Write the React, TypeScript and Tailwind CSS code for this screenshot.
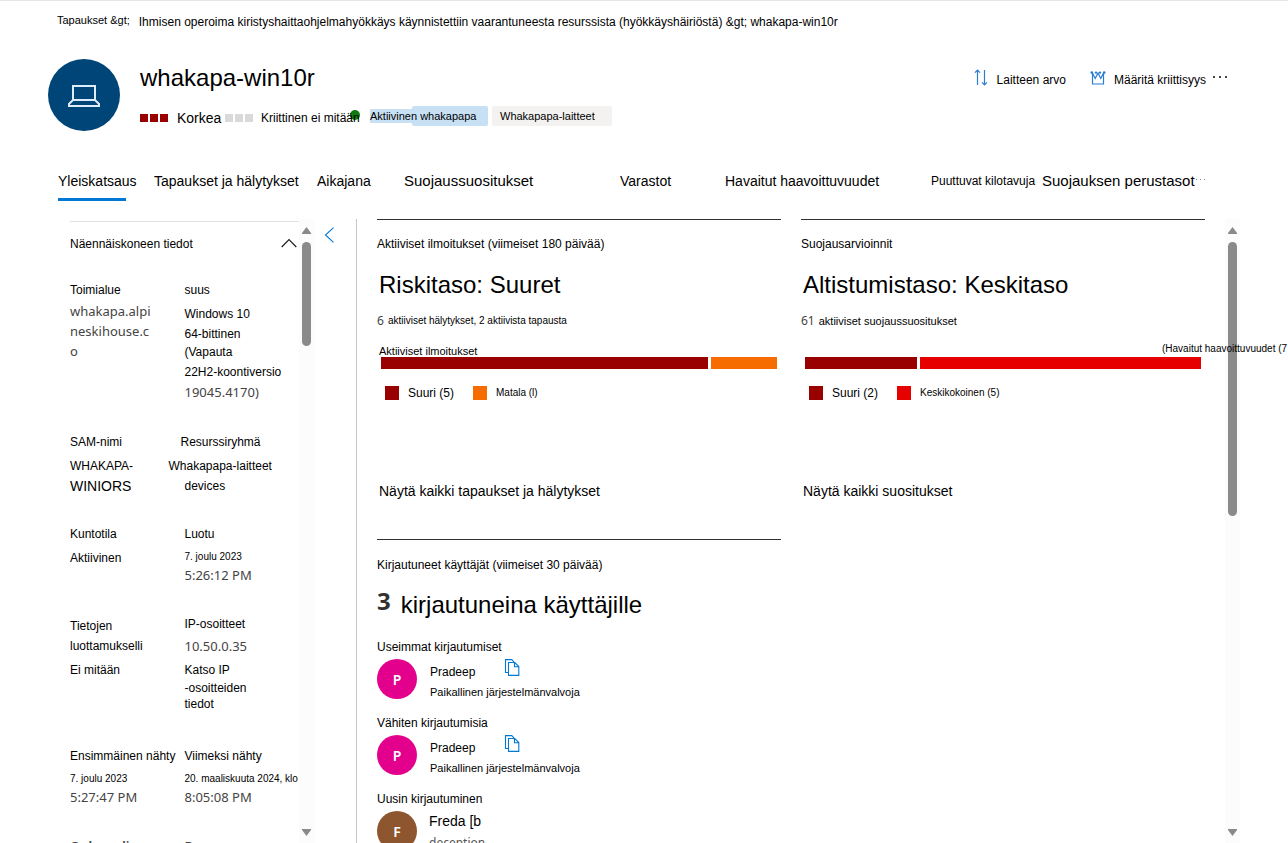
import type { ReactNode } from 'react'
import clsx from 'clsx'

type Line = { text: string; className: string }
type Segment = { label: string; share: number; color: string; labelClass: string }

const body = 'text-[12px] leading-5'
const small = 'text-[11px] leading-5'
const noto = "font-['Noto_Sans',sans-serif] text-[13px] leading-5 text-[#444]"

const tabs = [
  { label: 'Yleiskatsaus', className: 'text-[14px]' },
  { label: 'Tapaukset ja hälytykset', className: 'text-[14px]' },
  { label: 'Aikajana', className: 'text-[14px]' },
  { label: 'Suojaussuositukset', className: 'text-[15px]' },
  { label: 'Varastot', className: 'text-[14px]' },
  { label: 'Havaitut haavoittuvuudet', className: 'text-[14px]' },
  { label: 'Puuttuvat kilotavuja', className: 'text-[12px]' },
  { label: 'Suojauksen perustasot', className: 'text-[15px]' },
]

const details: { height: string; left: Line[]; right: Line[] }[] = [
  {
    height: 'h-38',
    left: [
      { text: 'Toimialue', className: clsx(body, 'mb-px') },
      { text: 'whakapa.alpi', className: noto },
      { text: 'neskihouse.c', className: noto },
      { text: 'o', className: noto },
    ],
    right: [
      { text: 'suus', className: clsx(body, 'mb-1') },
      { text: 'Windows 10', className: body },
      { text: '64-bittinen', className: body },
      { text: '(Vapauta', className: 'text-[12px] leading-4' },
      { text: '22H2-koontiversio', className: 'text-[12px] leading-6' },
      { text: '19045.4170)', className: "font-['Noto_Sans',sans-serif] text-[13px] leading-4 text-[#444]" },
    ],
  },
  {
    height: 'h-23',
    left: [
      { text: 'SAM-nimi', className: clsx(body, 'mb-1') },
      { text: 'WHAKAPA-', className: body },
      { text: 'WINIORS', className: 'text-[14px] leading-5' },
    ],
    right: [
      { text: 'Resurssiryhmä', className: clsx(body, 'mb-1 -ml-1') },
      { text: 'Whakapapa-laitteet', className: clsx(body, '-ml-4') },
      { text: 'devices', className: body },
    ],
  },
  {
    height: 'h-23',
    left: [
      { text: 'Kuntotila', className: clsx(body, 'mb-1') },
      { text: 'Aktiivinen', className: body },
    ],
    right: [
      { text: 'Luotu', className: clsx(body, 'mb-[5px]') },
      { text: '7. joulu 2023', className: 'text-[10px] leading-4' },
      { text: '5:26:12 PM', className: noto },
    ],
  },
  {
    height: 'h-[130px]',
    left: [
      { text: 'Tietojen', className: body },
      { text: 'luottamukselli', className: clsx(body, 'mb-1') },
      { text: 'Ei mitään', className: body },
    ],
    right: [
      { text: 'IP-osoitteet', className: 'text-[12px] leading-4 mb-1' },
      { text: '10.50.0.35', className: clsx(noto, 'mb-1') },
      { text: 'Katso IP', className: body },
      { text: '-osoitteiden', className: 'text-[12px] leading-4' },
      { text: 'tiedot', className: 'text-[12px] leading-4' },
    ],
  },
  {
    height: 'h-[90px]',
    left: [
      { text: 'Ensimmäinen nähty', className: clsx(body, 'mb-[5px]') },
      { text: '7. joulu 2023', className: 'text-[10px] leading-4' },
      { text: '5:27:47 PM', className: noto },
    ],
    right: [
      { text: 'Viimeksi nähty', className: clsx(body, 'mb-[5px]') },
      { text: '20. maaliskuuta 2024, klo', className: 'text-[10px] leading-4' },
      { text: '8:05:08 PM', className: noto },
    ],
  },
  {
    height: 'h-23',
    left: [{ text: 'Onboardi', className: clsx(noto, 'font-semibold') }],
    right: [{ text: 'R', className: clsx(noto, 'font-semibold') }],
  },
]

const alerts: Segment[] = [
  { label: 'Suuri (5)', share: 327, color: 'bg-[#990000]', labelClass: 'text-[12px]' },
  { label: 'Matala (l)', share: 66, color: 'bg-[#f76c00]', labelClass: 'text-[10px]' },
]

const exposure: Segment[] = [
  { label: 'Suuri (2)', share: 112, color: 'bg-[#990000]', labelClass: 'text-[12px]' },
  { label: 'Keskikokoinen (5)', share: 281, color: 'bg-[#e60000]', labelClass: 'text-[10px]' },
]

export default function App() {
  return (
    <div className="flex h-screen flex-col overflow-hidden border-t border-[#e5e5e5] bg-white font-['Liberation_Sans',Arial,sans-serif] text-black">
      <nav aria-label="Murupolku" className="flex h-[31px] shrink-0 gap-[9px] whitespace-nowrap pt-[11px] pl-[57px]">
        <a href="#tapaukset" className="text-[11px] leading-4">Tapaukset &amp;gt;</a>
        <a href="#tapaus" className={body}>
          Ihmisen operoima kiristyshaittaohjelmahyökkäys käynnistettiin vaarantuneesta resurssista (hyökkäyshäiriöstä) &amp;gt; whakapa-win10r
        </a>
      </nav>

      <DeviceHeader />

      <div className="mt-8 flex shrink-0 pl-[58px]">
        <div role="tablist" aria-label="Laitteen sivut" className="grid grid-cols-[96px_163px_87px_216px_105px_206px_111px_auto]">
          {tabs.map((tab, index) => (
            <button
              type="button"
              role="tab"
              key={tab.label}
              aria-selected={index === 0}
              className={clsx('flex h-[38px] flex-col justify-between pt-2 text-left leading-5 whitespace-nowrap', tab.className)}
            >
              {tab.label}
              {index === 0 ? <span className="h-[3px] w-[68px] bg-[#0078d4]" /> : null}
            </button>
          ))}
        </div>
        <button type="button" aria-label="Lisää välilehtiä" className="flex h-6 items-center pt-2">
          <Dots />
        </button>
      </div>

      <main className="mt-[18px] flex min-h-0 flex-1 pr-12 pl-[70px]">
        <aside className="w-[229px] shrink-0 pt-0.5">
          <div className="flex h-[59px] justify-between border-t border-[#e1e1e1] pt-3 pr-0.5">
            <h2 className={body}>Näennäiskoneen tiedot</h2>
            <button type="button" aria-label="Tiivistä tiedot" className="h-4.5">
              <svg width="16" height="10" viewBox="0 0 16 10" fill="none" stroke="#222" strokeWidth="1.3">
                <path d="M.7 9 8 1.6 15.3 9" />
              </svg>
            </button>
          </div>
          {details.map((row, index) => (
            <div key={index} className={clsx('grid grid-cols-2 whitespace-nowrap', row.height)}>
              <LineStack lines={row.left} />
              <LineStack lines={row.right} />
            </div>
          ))}
        </aside>
        <ScrollTrack thumb="h-26" />
        <div className="w-[43px] shrink-0 border-r border-[#c8c6c4] pt-[7px] pl-2.5">
          <button type="button" aria-label="Piilota paneeli">
            <svg width="11" height="16" viewBox="0 0 11 16" fill="none" stroke="#0078d4" strokeWidth="1.1">
              <path d="M9.5.7 1.5 8l8 7.3" />
            </svg>
          </button>
        </div>

        <div className="grid flex-1 auto-rows-[320px] grid-cols-2 gap-x-5 px-5">
          <Card
            heading="Aktiiviset ilmoitukset (viimeiset 180 päivää)"
            title="Riskitaso: Suuret"
            count="6"
            summary="aktiiviset hälytykset, 2 aktiivista tapausta"
            summaryClass="text-[10px] leading-5"
            footer="Näytä kaikki tapaukset ja hälytykset"
          >
            <p className="h-3 pl-0.5 text-[11px] leading-3 whitespace-nowrap">Aktiiviset ilmoitukset</p>
            <StackedBar segments={alerts} />
          </Card>
          <Card
            heading="Suojausarvioinnit"
            title="Altistumistaso: Keskitaso"
            count="61"
            summary="aktiiviset suojaussuositukset"
            summaryClass={small}
            footer="Näytä kaikki suositukset"
          >
            <div className="relative h-3">
              <p className="absolute -top-1 left-[361px] z-10 text-[10px] leading-4 whitespace-nowrap">(Havaitut haavoittuvuudet (7</p>
            </div>
            <StackedBar segments={exposure} />
          </Card>
          <section className="border-t border-[#323130] pt-[15px] whitespace-nowrap">
            <h2 className={body}>Kirjautuneet käyttäjät (viimeiset 30 päivää)</h2>
            <p className="mt-3 mb-[18px] flex h-8 gap-2.5 text-[24px] leading-9">
              <span className="font-['Noto_Sans',sans-serif] text-[24px] leading-7 font-bold text-[#323130]">3</span>
              kirjautuneina käyttäjille
            </p>
            <User label="Useimmat kirjautumiset" initial="P" color="bg-[#e3008c]" name="Pradeep" />
            <User label="Vähiten kirjautumisia" initial="P" color="bg-[#e3008c]" name="Pradeep" />
            <div className={body}>Uusin kirjautuminen</div>
            <div className="mt-0.5 flex gap-3">
              <Avatar initial="F" color="bg-[#8e562e]" />
              <div>
                <p className="text-[14px] leading-5">Freda [b</p>
                <p className="font-['Noto_Sans',sans-serif] text-[12px] leading-6 text-[#555]">deception</p>
              </div>
            </div>
          </section>
        </div>
        <ScrollTrack thumb="h-[274px]" />
      </main>
    </div>
  )
}

function DeviceHeader() {
  return (
    <header className="mt-[27px] flex shrink-0 pr-[60px] pl-12 whitespace-nowrap">
      <div className="flex size-18 items-center justify-center rounded-full bg-[#004578]">
        <svg className="mt-0.5" width="32" height="24" viewBox="0 0 32 24" fill="none" stroke="#deecf9" strokeWidth="2">
          <path d="M5 16V2h22v14M5 16h22l4 4v2H1v-2z" />
        </svg>
      </div>
      <div className="ml-5 flex-1">
        <h1 className="text-[24px] leading-[38px]">whakapa-win10r</h1>
        <div className="mt-[9px] flex h-5 items-center">
          <div className="flex items-center pt-1">
            <Squares color="bg-[#990000]" />
            <span className="ml-[9px] w-12 text-[14px]">Korkea</span>
            <Squares color="bg-[#d9d9d9]" />
            <span className="relative ml-2 w-[109px] text-[12px]">
              <span className="absolute top-px left-[89px] size-2.5 rounded-full bg-[#107c10]" />
              <span className="relative">Kriittinen ei mitään</span>
            </span>
          </div>
          <span className="relative flex h-5 w-[118px] items-center">
            <span className="absolute right-0 h-5 w-19 rounded-xs bg-[#c7e0f4]" />
            <span className="relative bg-[#c7e0f4] text-[11px] leading-[14px]">Aktiivinen whakapapa</span>
          </span>
          <span className="ml-1 h-5 w-30 rounded-xs bg-[#f3f2f1] px-2 text-[11px] leading-5">Whakapapa-laitteet</span>
        </div>
      </div>
      <div className="flex h-5 items-center gap-6 pt-[21px]">
        <button type="button" className="flex items-center gap-2 text-[12px]">
          <svg className="mb-1.5" width="15" height="17" viewBox="0 0 15 17" fill="none" stroke="#2b7cd3" strokeWidth="1.2">
            <path d="M3.500 16V1.5M1 3.700 3.500 1.2l2.500 2.500M10.500 1v14.500M8 13.300l2.500 2.500 2.500-2.500" />
          </svg>
          Laitteen arvo
        </button>
        <div className="flex items-center gap-1.5">
          <button type="button" className="flex items-center gap-2 text-[12px]">
            <svg className="mb-1" width="16" height="14" viewBox="0 0 16 14" fill="none" stroke="#2b7cd3" strokeWidth="1.2">
              <path d="M2.500 2v11h11V2L10.800 7.500 8 2 5.200 7.500z" />
              <g fill="#2b7cd3" stroke="none">
                <circle cx="1.800" cy="1.600" r="1.300" />
                <circle cx="6" cy="1.600" r="1.200" />
                <circle cx="10" cy="1.600" r="1.200" />
                <circle cx="14.200" cy="1.600" r="1.300" />
              </g>
            </svg>
            Määritä kriittisyys
          </button>
          <button type="button" aria-label="Lisää toimintoja">
            <svg className="mb-1.5" width="16" height="8" viewBox="0 0 16 8" fill="#444">
              <path d="M1 3h2v2H1zM7 3h2v2H7zM13 3h2v2h-2z" />
            </svg>
          </button>
        </div>
      </div>
    </header>
  )
}

function Card({ heading, title, count, summary, summaryClass, footer, children }: {
  heading: string
  title: string
  count: string
  summary: string
  summaryClass: string
  footer: string
  children: ReactNode
}) {
  return (
    <section className="flex flex-col border-t border-[#323130] pt-3.5">
      <h2 className={body}>{heading}</h2>
      <p className="mt-[11px] pl-0.5 text-[24px] leading-10 whitespace-nowrap">{title}</p>
      <p className="mt-1.5 flex gap-1 whitespace-nowrap">
        <span className="font-['Noto_Sans',sans-serif] text-[12px] leading-5 text-[#444]">{count}</span>
        <span className={summaryClass}>{summary}</span>
      </p>
      <div className="mt-3.5 flex-1">{children}</div>
      <a href="#kaikki" className="mb-9 pl-0.5 text-[14px] leading-6">{footer}</a>
    </section>
  )
}

function StackedBar({ segments }: { segments: Segment[] }) {
  return (
    <div className="px-1">
      <div className="flex h-3 gap-[3px]">
        {segments.map((segment) => (
          <div key={segment.label} className={segment.color} style={{ flexGrow: segment.share }} />
        ))}
      </div>
      <ul className="mt-3.5 flex pl-1">
        {segments.map((segment) => (
          <li key={segment.label} className="flex min-w-22 items-center gap-[9px] leading-5 whitespace-nowrap">
            <span className={clsx('size-3.5', segment.color)} />
            <span className={segment.labelClass}>{segment.label}</span>
          </li>
        ))}
      </ul>
    </div>
  )
}

function User({ label, initial, color, name }: { label: string; initial: string; color: string; name: string }) {
  return (
    <div className="pb-3.5">
      <div className={body}>{label}</div>
      <div className="mt-0.5 flex h-10">
        <Avatar initial={initial} color={color} />
        <div className="ml-[13px]">
          <div className="flex h-[23px] items-start gap-[29px]">
            <span className={clsx(body, 'pt-[3px]')}>{name}</span>
            <button type="button" aria-label="Kopioi nimi">
              <svg width="16" height="17" viewBox="0 0 16 17" fill="none" stroke="#0078d4" strokeWidth="1.1">
                <path d="M4.500 13.500H1.500V.6h6.300L10.500 3.500M4.500 3.500h6.300l4 4v8.900H4.500zM10.500 3.500v4.200h4.300" />
              </svg>
            </button>
          </div>
          <p className={small}>Paikallinen järjestelmänvalvoja</p>
        </div>
      </div>
    </div>
  )
}

function Avatar({ initial, color }: { initial: string; color: string }) {
  return (
    <span className={clsx("flex size-10 shrink-0 items-center justify-center rounded-full font-['Noto_Sans',sans-serif] text-[14px] font-semibold text-white", color)}>
      {initial}
    </span>
  )
}

function LineStack({ lines }: { lines: Line[] }) {
  return (
    <div>
      {lines.map((line) => <p key={line.text} className={line.className}>{line.text}</p>)}
    </div>
  )
}

function Squares({ color }: { color: string }) {
  return (
    <span className="flex gap-0.5">
      <span className={clsx('size-2', color)} />
      <span className={clsx('size-2', color)} />
      <span className={clsx('size-2', color)} />
    </span>
  )
}

function Dots() {
  return (
    <svg width="12" height="3" viewBox="0 0 12 3" fill="#888">
      <path d="M1 1h1v1H1zM5 1h1v1H5zM9 1h1v1H9z" />
    </svg>
  )
}

function ScrollTrack({ thumb }: { thumb: string }) {
  return (
    <div aria-hidden="true" className="flex w-[15px] shrink-0 flex-col items-center bg-[#fcfcfc] pt-2 pb-[7px]">
      <svg width="9" height="7" viewBox="0 0 9 7" fill="#8a8a8a"><path d="M4.500 0 9 6v1H0V6z" /></svg>
      <div className={clsx('mt-2 w-[9px] rounded-full bg-[#8a8a8a]', thumb)} />
      <svg className="mt-auto" width="9" height="7" viewBox="0 0 9 7" fill="#8a8a8a"><path d="M4.500 7 9 1V0H0v1z" /></svg>
    </div>
  )
}
